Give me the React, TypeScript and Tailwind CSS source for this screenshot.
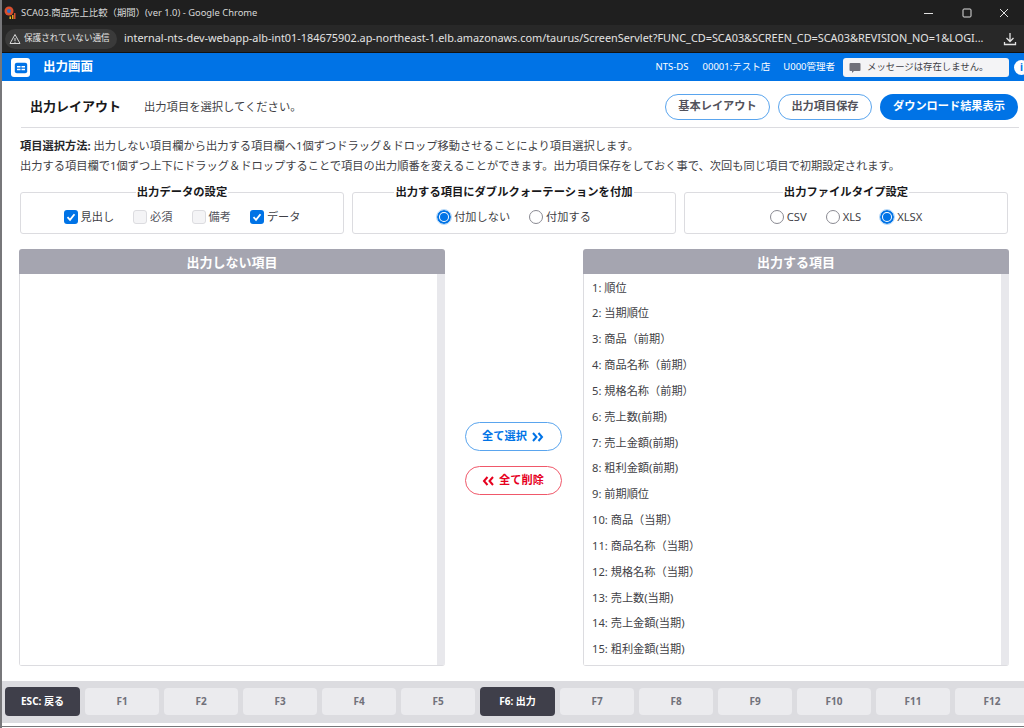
import React from "react";

const font = { fontFamily: '"Noto Sans","Noto Sans CJK JP",sans-serif' };

const items = ["1: 順位","2: 当期順位","3: 商品（前期）","4: 商品名称（前期）","5: 規格名称（前期）","6: 売上数(前期)","7: 売上金額(前期)","8: 粗利金額(前期)","9: 前期順位","10: 商品（当期）","11: 商品名称（当期）","12: 規格名称（当期）","13: 売上数(当期)","14: 売上金額(当期)","15: 粗利金額(当期)"];

function Check({ on, label }: { on?: boolean; label: string }) {
  return (
    <span className="flex items-center gap-[3px]">
      {on ? (
        <span className="w-[14px] h-[14px] rounded-[3px] bg-[#0073e6] flex items-center justify-center">
          <svg width="10" height="10" viewBox="0 0 10 10"><path d="M1.5 5.2 4 7.8 8.5 2.2" fill="none" stroke="#fff" strokeWidth="1.8" /></svg>
        </span>
      ) : (
        <span className="w-[14px] h-[14px] rounded-[3px] bg-[#f4f4f6] border border-[#dcdce0]" />
      )}
      <span className={on ? "text-[#3f3f46]" : "text-[#52525b]"}>{label}</span>
    </span>
  );
}

function Radio({ on, label }: { on?: boolean; label: string }) {
  return (
    <span className="flex items-center gap-[3px]">
      {on ? (
        <span className="w-[14px] h-[14px] rounded-full border-2 border-[#0073e6] bg-white flex items-center justify-center outline outline-[#b6d8f8]">
          <span className="w-[8px] h-[8px] rounded-full bg-[#0073e6]" />
        </span>
      ) : (
        <span className="w-[14px] h-[14px] rounded-full border border-[#8a8a92] bg-white" />
      )}
      <span className="text-[#3f3f46]">{label}</span>
    </span>
  );
}

function Group({ title, children }: { title: string; children: React.ReactNode }) {
  return (
    <fieldset className="border border-[#dcdce0] rounded-[3px] h-[49px] min-w-0 w-[324px] shrink-0">
      <legend className="mx-auto px-[1px] text-[11.3px] font-bold leading-[14px] text-[#18181b]">{title}</legend>
      <div className="flex justify-center gap-[19px] text-[11.2px] leading-[14px] mt-[11px]">{children}</div>
    </fieldset>
  );
}

function Panel({ title, children }: { title: string; children?: React.ReactNode }) {
  return (
    <div className="w-[426px] h-[417px] shrink-0 flex flex-col rounded-[3px] overflow-hidden border-b border-[#dcdce0]">
      <div className="h-[25px] shrink-0 bg-[#a5a5b0] text-white text-[13px] font-bold flex items-center justify-center pt-[2px]">{title}</div>
      <div className="flex-1 flex border-l border-[#dcdce0] min-h-0">
        <div className="flex-1 pl-[8px] pt-[1px] overflow-hidden text-[11.2px] text-[#3f3f46]">{children}</div>
        <div className="w-[8px] bg-[#e8e8ec]" />
      </div>
    </div>
  );
}

export default function App() {
  const fkeys = ["F1","F2","F3","F4","F5"];
  const fkeys2 = ["F7","F8","F9","F10","F11","F12"];
  return (
    <div style={font} className="w-[1024px] h-[728px] overflow-hidden flex flex-col bg-white border-l-2 border-[#77777a] relative">
      <div className="h-[25px] shrink-0 bg-[#1f1f1f] flex items-center text-[9.4px] text-[#d8d8d8] pl-[2px] pt-[1px]">
        <svg width="14" height="14" viewBox="0 0 14 14" className="shrink-0">
          <circle cx="5" cy="5" r="4.5" fill="#d9502e" /><circle cx="5" cy="5" r="2" fill="#2f6fc4" />
          <rect x="8" y="9" width="1.5" height="4" fill="#e8a020" /><rect x="10" y="7" width="1.5" height="6" fill="#d9502e" /><rect x="5.5" y="10.5" width="1.5" height="2.5" fill="#e8c020" />
        </svg>
        <span className="ml-[3px] whitespace-nowrap">SCA03.商品売上比較（期間）(ver 1.0) - Google Chrome</span>
        <div className="ml-auto flex items-center text-[#e0e0e0]">
          <svg width="10" height="10" viewBox="0 0 10 10" className="mr-[28px]"><path d="M0 5.5h9" stroke="currentColor" /></svg>
          <svg width="10" height="10" viewBox="0 0 10 10" className="mr-[27px]"><rect x="1" y="1" width="8" height="8" rx="1" fill="none" stroke="currentColor" /></svg>
          <svg width="10" height="10" viewBox="0 0 10 10" className="mr-[15px]"><path d="M1 1l8 8M9 1l-8 8" stroke="currentColor" /></svg>
        </div>
      </div>
      <div className="h-[28px] shrink-0 bg-[#282828] flex items-center text-[#e3e3e3] border-b border-[#111]">
        <div className="ml-[3px] h-[20px] w-[112px] rounded-full bg-[#3a3a3a] flex items-center pl-[4px] text-[8.6px] shrink-0 whitespace-nowrap">
          <svg width="12" height="12" viewBox="0 0 12 12" className="mr-[3px] shrink-0"><path d="M6 1.5 11 10.5H1Z" fill="none" stroke="#d8d8d8" /><path d="M6 5v3M6 8.8v1" stroke="#d8d8d8" /></svg>
          保護されていない通信
        </div>
        <span className="ml-[7px] text-[10.86px] whitespace-nowrap">internal-nts-dev-webapp-alb-int01-184675902.ap-northeast-1.elb.amazonaws.com/taurus/ScreenServlet?FUNC_CD=SCA03&amp;SCREEN_CD=SCA03&amp;REVISION_NO=1&amp;LOGI...</span>
        <svg width="14" height="14" viewBox="0 0 14 14" className="ml-auto mr-[7px] shrink-0"><path d="M7 1v8M3.5 6 7 9.5 10.500 6M1.500 10v2.500h11V10" fill="none" stroke="#e3e3e3" strokeWidth="1.300" /></svg>
      </div>
      <div className="h-[28px] shrink-0 bg-[#0073e6] flex items-center text-white overflow-hidden pt-[1px]">
        <div className="ml-[9px] w-[19px] h-[19px] rounded-[3px] bg-white flex items-center justify-center shrink-0">
          <svg width="14" height="12" viewBox="0 0 14 12"><rect x="0.800" y="0.800" width="12.400" height="10.400" rx="2" fill="#0073e6" /><path d="M3 4h3.500v1.500H3zM7.500 4H11v1.500H7.500zM3 6.800h3.500v1.500H3zM7.500 6.800H11v1.500H7.500z" fill="#fff" /></svg>
        </div>
        <span className="ml-[13px] text-[12.5px] font-bold">出力画面</span>
        <div className="ml-auto flex items-center text-[9.5px] shrink-0 -mr-[5px]">
          <span>NTS-DS</span>
          <span className="ml-[14px]">00001:テスト店</span>
          <span className="ml-[13px]">U000管理者</span>
          <div className="ml-[8px] w-[166px] h-[19px] rounded-[3px] bg-[#f4f4f6] flex items-center pl-[6px] text-[#3f3f46] text-[9.4px]">
            <svg width="12" height="12" viewBox="0 0 12 12" className="mr-[6px]"><path d="M1.500 1h9a1 1 0 0 1 1 1v6a1 1 0 0 1-1 1H5L3 11V9H1.500a1 1 0 0 1-1-1V2a1 1 0 0 1 1-1Z" fill="#71717a" /></svg>
            メッセージは存在しません。
          </div>
          <div className="ml-[5px] w-[15px] h-[15px] rounded-full bg-white text-[#0073e6] text-[10px] font-bold flex items-center justify-center">i</div>
        </div>
      </div>
      <div className="flex items-center h-[47px] shrink-0 ml-[19px] mr-[5px] border-b border-[#dcdce0] pt-[5px]">
        <span className="ml-[9px] mt-[1px] text-[13px] font-bold text-[#18181b]">出力レイアウト</span>
        <span className="ml-[23px] mt-[2px] text-[11.3px] text-[#3f3f46]">出力項目を選択してください。</span>
        <div className="ml-auto flex gap-[8px] text-[11.2px] font-bold -translate-x-[1px]">
          <div className="w-[105px] h-[26px] rounded-full border border-[#5aa5ee] text-[#52525b] flex items-center justify-center">基本レイアウト</div>
          <div className="w-[94px] h-[26px] rounded-full border border-[#5aa5ee] text-[#52525b] flex items-center justify-center">出力項目保存</div>
          <div className="w-[138px] h-[26px] rounded-full bg-[#0073e6] text-white flex items-center justify-center">ダウンロード結果表示</div>
        </div>
      </div>
      <div className="mx-[18px] mt-[8px] text-[11.25px] leading-[20px] text-[#3f3f46] shrink-0 whitespace-nowrap">
        <div><span className="font-bold text-[#27272a]">項目選択方法:</span> 出力しない項目欄から出力する項目欄へ1個ずつドラッグ＆ドロップ移動させることにより項目選択します。</div>
        <div>出力する項目欄で1個ずつ上下にドラッグ＆ドロップすることで項目の出力順番を変えることができます。出力項目保存をしておく事で、次回も同じ項目で初期設定されます。</div>
      </div>
      <div className="flex gap-[8px] ml-[18px] mt-[9px] shrink-0">
        <Group title="出力データの設定">
          <Check on label="見出し" /><Check label="必須" /><Check label="備考" /><Check on label="データ" />
        </Group>
        <Group title="出力する項目にダブルクォーテーションを付加">
          <Radio on label="付加しない" /><Radio label="付加する" />
        </Group>
        <Group title="出力ファイルタイプ設定">
          <Radio label="CSV" /><Radio label="XLS" /><Radio on label="XLSX" />
        </Group>
      </div>
      <div className="flex ml-[17px] mt-[15px] shrink-0">
        <Panel title="出力しない項目" />
        <div className="w-[138px] shrink-0 flex flex-col items-center justify-center gap-[15px] text-[11.2px] font-bold pt-[2px]">
          <div className="w-[97px] h-[29px] rounded-full border border-[#5aa5ee] text-[#0073e6] flex items-center justify-center gap-[5px] -translate-x-[1px]">
            全て選択
            <svg width="12" height="10" viewBox="0 0 12 10"><path d="M1 1l3.500 4L1 9M6.500 1 10 5 6.500 9" fill="none" stroke="#0073e6" strokeWidth="2" /></svg>
          </div>
          <div className="w-[97px] h-[29px] rounded-full border border-[#f0586a] text-[#e6001e] flex items-center justify-center gap-[5px] -translate-x-[1px]">
            <svg width="12" height="10" viewBox="0 0 12 10"><path d="M5.500 1 2 5l3.500 4M11 1 7.500 5 11 9" fill="none" stroke="#e6001e" strokeWidth="2" /></svg>
            全て削除
          </div>
        </div>
        <Panel title="出力する項目">
          {items.map((t) => (
            <div key={t} className="h-[25.850px] flex items-center whitespace-nowrap">{t}</div>
          ))}
        </Panel>
      </div>
      <div className="mt-[15px] h-[42px] shrink-0 bg-[#dcdce0] flex items-center gap-[5px] pl-[3px] text-[10px] font-bold overflow-hidden pb-[1px]">
        <div className="w-[75px] h-[29px] shrink-0 rounded-[4px] bg-[#3f3f4a] text-white flex items-center justify-center">ESC: 戻る</div>
        {fkeys.map((k) => (
          <div key={k} className="w-[74px] h-[27px] shrink-0 rounded-[4px] bg-[#ebebee] text-[#71717a] flex items-center justify-center">{k}</div>
        ))}
        <div className="w-[75px] h-[29px] shrink-0 rounded-[4px] bg-[#3f3f4a] text-white flex items-center justify-center">F6: 出力</div>
        {fkeys2.map((k) => (
          <div key={k} className="w-[74px] h-[27px] shrink-0 rounded-[4px] bg-[#ebebee] text-[#71717a] flex items-center justify-center">{k}</div>
        ))}
      </div>
      <div className="h-[3px] shrink-0 bg-white" />
      <div className="h-[1px] shrink-0 bg-[#77777a]" />
      <div className="flex-1 bg-white" />
    </div>
  );
}
